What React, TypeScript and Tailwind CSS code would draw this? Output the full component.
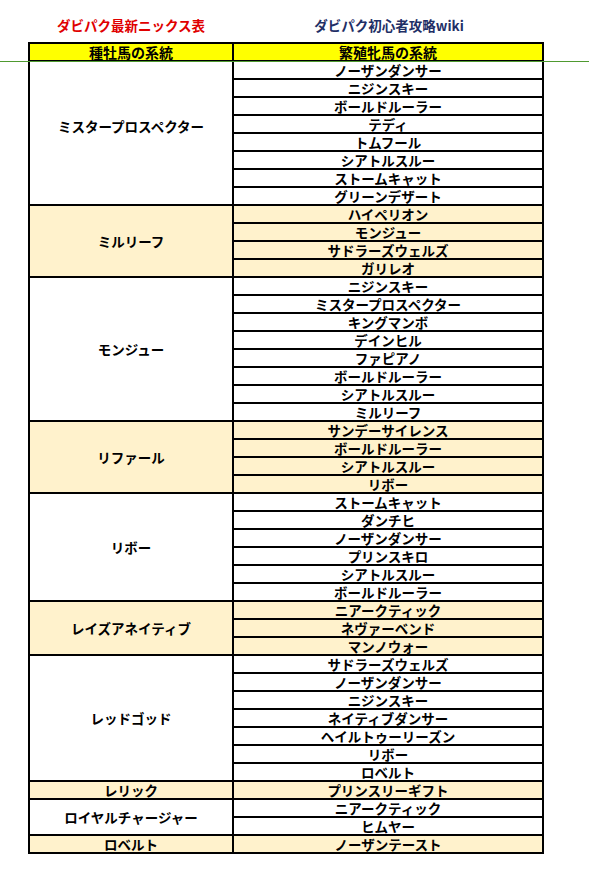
const groups: { sire: string; cream: boolean; mares: string[] }[] = [
  {
    sire: "ミスタープロスペクター",
    cream: false,
    mares: [
      "ノーザンダンサー",
      "ニジンスキー",
      "ボールドルーラー",
      "テディ",
      "トムフール",
      "シアトルスルー",
      "ストームキャット",
      "グリーンデザート",
    ],
  },
  {
    sire: "ミルリーフ",
    cream: true,
    mares: ["ハイペリオン", "モンジュー", "サドラーズウェルズ", "ガリレオ"],
  },
  {
    sire: "モンジュー",
    cream: false,
    mares: [
      "ニジンスキー",
      "ミスタープロスペクター",
      "キングマンボ",
      "デインヒル",
      "ファピアノ",
      "ボールドルーラー",
      "シアトルスルー",
      "ミルリーフ",
    ],
  },
  {
    sire: "リファール",
    cream: true,
    mares: ["サンデーサイレンス", "ボールドルーラー", "シアトルスルー", "リボー"],
  },
  {
    sire: "リボー",
    cream: false,
    mares: [
      "ストームキャット",
      "ダンチヒ",
      "ノーザンダンサー",
      "プリンスキロ",
      "シアトルスルー",
      "ボールドルーラー",
    ],
  },
  {
    sire: "レイズアネイティブ",
    cream: true,
    mares: ["ニアークティック", "ネヴァーベンド", "マンノウォー"],
  },
  {
    sire: "レッドゴッド",
    cream: false,
    mares: [
      "サドラーズウェルズ",
      "ノーザンダンサー",
      "ニジンスキー",
      "ネイティブダンサー",
      "ヘイルトゥーリーズン",
      "リボー",
      "ロベルト",
    ],
  },
  { sire: "レリック", cream: true, mares: ["プリンスリーギフト"] },
  { sire: "ロイヤルチャージャー", cream: false, mares: ["ニアークティック", "ヒムヤー"] },
  { sire: "ロベルト", cream: true, mares: ["ノーザンテースト"] },
]

const font = "font-['Noto_Sans_CJK_JP',sans-serif]"

export default function App() {
  return (
    <div className={`relative w-[589px] h-[883px] bg-white ${font}`}>
      {/* title row */}
      <div className="flex ml-[28px] w-[516px] pt-[15px] h-[42px] font-bold text-[13.5px] leading-[20px]">
        <div className="w-[206px] text-center text-[#e00000]">ダビパク最新ニックス表</div>
        <div className="w-[310px] text-center text-[#1f2f66]">ダビパク初心者攻略wiki</div>
      </div>

      {/* table */}
      <div className="ml-[28px] w-[516px] border-2 border-black text-black font-bold">
        <div className="flex h-[16px] bg-[#ffff00] text-[14px] leading-[16px]">
          <div className="w-[204px] shrink-0 border-r-2 border-black flex items-end justify-center">
            種牡馬の系統
          </div>
          <div className="flex-1 flex items-end justify-center">繁殖牝馬の系統</div>
        </div>

        {groups.map((g, gi) => (
          <div
            key={g.sire}
            className={`flex border-t-2 border-black text-[13.5px] leading-[16px] ${g.cream ? "bg-[#fff2cc]" : "bg-white"}`}
          >
            <div
              className={`w-[204px] shrink-0 border-r-2 border-black flex items-center justify-center ${gi === 0 ? "pb-[14px]" : ""}`}
            >
              {g.sire}
            </div>
            <div className="flex-1 flex flex-col">
              {g.mares.map((m, i) => (
                <div
                  key={m + i}
                  className={`h-[16px] flex items-end justify-center ${i > 0 ? "box-content border-t-2 border-black" : ""}`}
                >
                  {m}
                </div>
              ))}
            </div>
          </div>
        ))}
      </div>

      {/* green rule across the page */}
      <div className="absolute left-0 top-[61px] w-full h-px bg-[#4f9a30]" />
    </div>
  )
}
